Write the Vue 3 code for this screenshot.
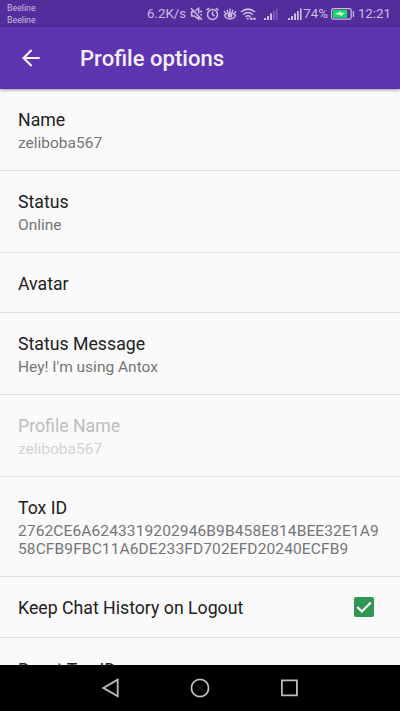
<script setup>
const rows = [
  { title: 'Name', summary: 'zeliboba567', size: 'double' },
  { title: 'Status', summary: 'Online', size: 'double' },
  { title: 'Avatar', size: 'single' },
  { title: 'Status Message', summary: "Hey! I'm using Antox", size: 'double' },
  { title: 'Profile Name', summary: 'zeliboba567', size: 'double', disabled: true },
  { title: 'Tox ID', summary: '2762CE6A6243319202946B9B458E814BEE32E1A958CFB9FBC11A6DE233FD702EFD20240ECFB9', size: 'triple' },
  { title: 'Keep Chat History on Logout', size: 'single', checked: true },
  { title: 'Reset Tox ID', size: 'single' }
]
</script>

<template>
  <div class="screen">
    <header class="status-bar">
      <div class="carriers"><span>Beeline</span><span>Beeline</span></div>
      <div class="indicators">
        <span class="speed">6.2K/s</span>
        <svg class="mute" width="13" height="14" viewBox="0 0 13 14" fill="none" stroke="currentColor" stroke-width="1.5">
          <path d="M3.6 4.8H1.6V9h2.8l4.3 3.2V9M5.4 3.6l3.3-2.2v5.2M1 1.2l11 11.6M10 5.2l2-1.2M10.4 7.7H12" />
        </svg>
        <svg class="alarm" width="13" height="14" viewBox="0 0 13 14" fill="none" stroke="currentColor" stroke-width="1.5">
          <circle cx="6.5" cy="7.5" r="5" /><path d="M6.5 4.6v3.1l2 1.3M.6 3.2l2.6-2.1M12.4 3.2 9.8 1.1" />
        </svg>
        <svg class="eye" width="14" height="14" viewBox="0 0 14 14" fill="none" stroke="currentColor" stroke-width="1.4">
          <path d="M1.4 8.3Q7 3.2 12.6 8.3 11 12 7 12T1.4 8.3zM2.8 6.4.9 4.2M11.2 6.4l1.9-2.2M7 5V1.6M4.8 5.2 4 2.8M9.2 5.2l.8-2.4" />
          <circle cx="7" cy="8.4" r="2.4" fill="currentColor" stroke="none" />
        </svg>
        <svg class="wifi" width="17" height="14" viewBox="0 0 17 14" fill="none" stroke="currentColor" stroke-width="1.5">
          <path d="M1 5Q8 -.8 15 5M3.2 7.5q4.8-4 9.6 0M5.4 9.8q2.6-2 5.2 0" />
          <path d="M6.3 11h3L7.8 13zM9.9 10.8h2.8v2H9.9zM13.3 10.8h2.4v2h-2.4z" fill="currentColor" stroke="none" />
        </svg>
        <svg class="signal weak" width="14" height="13" viewBox="0 0 14 13" fill="currentColor">
          <path d="M0 10h2v2H0zM3 8h2v4H3zM6 5.5h2V12H6z" />
          <path d="M9 3h1.7v9H9zM12 1h1.5v11H12z" opacity=".35" />
        </svg>
        <svg class="signal" width="14" height="13" viewBox="0 0 14 13" fill="currentColor">
          <path d="M0 10h2v2H0zM3 8h2v4H3zM6 5.5h2V12H6zM9 3h1.8v9H9zM12 .5h1.6V12H12z" />
        </svg>
        <span class="percent">74%</span>
        <svg class="battery" width="24" height="12" viewBox="0 0 24 12">
          <rect x=".6" y=".6" width="19.6" height="10.6" rx="1.8" fill="none" stroke="currentColor" stroke-width="1.2" />
          <path d="M2 2h14.2v7.8H2z" fill="#12dc60" />
          <path d="M4 6 10 3.6v1.3l3.8-.5-4 4V6.9L4 6z" fill="#f2fff4" />
          <path d="M21.8 3h1.3v6h-1.3z" fill="currentColor" />
        </svg>
        <span class="clock">12:21</span>
      </div>
    </header>
    <nav class="toolbar">
      <svg class="back" width="20" height="20" viewBox="0 0 20 20" fill="none" stroke="#f7f4fc" stroke-width="2.1">
        <path d="M18.7 10H2.8M10.6 2 2.6 10l8 8" />
      </svg>
      <h1>Profile options</h1>
    </nav>
    <main class="list">
      <section v-for="row in rows" :key="row.title" class="row" :class="[row.size, { disabled: row.disabled }]">
        <div class="copy">
          <div class="title">{{ row.title }}</div>
          <div v-if="row.summary" class="summary">{{ row.summary }}</div>
        </div>
        <svg v-if="row.checked" class="check" width="20" height="20" viewBox="0 0 20 20">
          <rect width="20" height="20" rx="2" fill="#329553" />
          <path d="m3.3 10.1 4.5 4.5 9-9" fill="none" stroke="#fff" stroke-width="2.1" />
        </svg>
      </section>
    </main>
    <footer class="nav-bar">
      <svg width="18" height="20" viewBox="0 0 18 20"><path d="M16.7 1.6v16.6L2.3 9.9z" /></svg>
      <svg width="20" height="20" viewBox="0 0 20 20"><circle cx="10" cy="10" r="8.6" /></svg>
      <svg width="18" height="18" viewBox="0 0 18 18"><path d="M.9 1.3h15v15H.9z" /></svg>
    </footer>
  </div>
</template>

<style>
body { margin: 0; overflow: hidden; }
</style>

<style scoped>
.screen { width: 400px; height: 711px; display: flex; flex-direction: column; overflow: hidden; background: #fafafa; font-family: Roboto, sans-serif; }
.status-bar { flex: 0 0 27px; display: flex; justify-content: space-between; background: #532d9b; color: #cbbde3; }
.carriers { display: flex; flex-direction: column; padding: 2px 0 0 7px; font-size: 8.8px; line-height: 12px; }
.indicators { display: flex; align-items: center; padding: 1px 9px 0 0; font-size: 13.3px; line-height: 26px; white-space: nowrap; }
.indicators svg { flex: none; }
.mute { margin-left: 4px; }
.alarm { margin-left: 3px; }
.eye { margin-left: 4px; }
.wifi { margin-left: 3px; }
.signal { margin-left: 10px; }
.signal.weak { margin-left: 7px; }
.percent { margin-left: 1px; }
.battery { margin-left: 3px; }
.clock { margin-left: 3px; }
.toolbar { flex: 0 0 62px; box-sizing: border-box; display: flex; align-items: center; padding-left: 21px; background: #5e35b1; box-shadow: 0 1px 3px rgba(0, 0, 0, .4); z-index: 1; }
h1 { margin: 0 0 0 39px; color: #f4effb; font-size: 22.1px; line-height: 26px; font-weight: 500; }
.list { flex: 1; min-height: 0; overflow: hidden; }
.row { box-sizing: border-box; height: 82px; display: flex; justify-content: space-between; align-items: flex-start; padding: 20px 18px 0; border-bottom: 1px solid #dedede; }
.row.single { height: 60px; }
.row.triple { height: 100px; }
.row.single:nth-child(n + 7) { height: 61px; }
.row:last-child { padding-top: 21px; }
.title { color: #212121; font-size: 17.72px; line-height: 22px; }
.summary { margin-top: 2.5px; color: #757575; font-size: 15.5px; line-height: 18.3px; word-break: break-all; }
.triple .summary { margin-right: -4px; letter-spacing: .12px; }
.disabled .title { color: #bdbdbd; }
.disabled .summary { color: #d2d2d2; }
.check { flex: none; margin-right: 8px; }
.nav-bar { flex: 0 0 46px; display: flex; align-items: center; justify-content: center; gap: 71px; background: #000; }
.nav-bar svg { fill: none; stroke: #bcbcbc; stroke-width: 1.8; }
</style>
